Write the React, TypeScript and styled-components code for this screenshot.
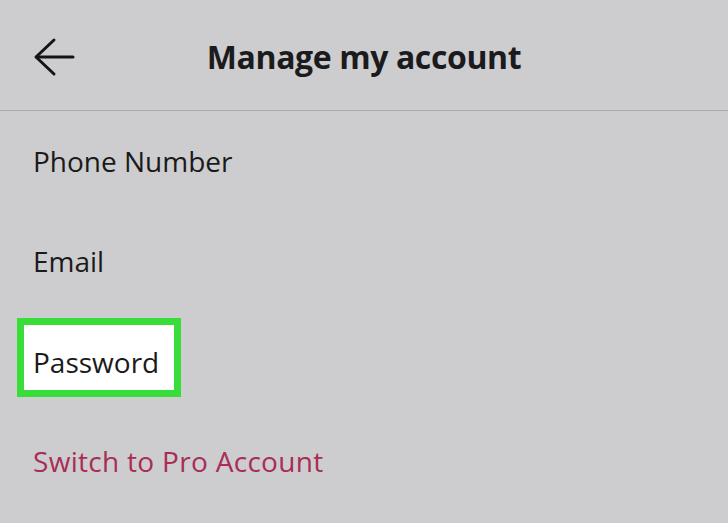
import React from 'react';
import styled, { createGlobalStyle } from 'styled-components';

const GlobalStyle = createGlobalStyle`
  html, body {
    margin: 0;
    padding: 0;
    background: #cdcdcf;
  }
  body {
    font-family: 'Open Sans', 'Liberation Sans', sans-serif;
    -webkit-font-smoothing: antialiased;
  }
`;

const Screen = styled.div`
  width: 728px;
  height: 523px;
  overflow: hidden;
  background: #cdcdcf;
`;

const Header = styled.header`
  display: grid;
  grid-template-columns: 1fr auto 1fr;
  align-items: center;
  height: 110px;
  border-bottom: 1px solid #a9a9ab;
`;

const BackButton = styled.button`
  justify-self: start;
  display: flex;
  align-items: center;
  margin-left: 32px;
  margin-top: 4px;
  padding: 0;
  border: 0;
  background: none;
  color: #141414;
`;

const Title = styled.h1`
  margin: 3px 0 0;
  font-size: 32px;
  font-weight: 700;
  letter-spacing: -0.4px;
  color: #1b1b1d;
`;

const List = styled.ul`
  margin: 0;
  padding: 0;
  list-style: none;
`;

const Row = styled.li<{ danger?: boolean }>`
  display: flex;
  align-items: center;
  height: 100px;
  padding-left: 33px;
  font-size: 28px;
  letter-spacing: ${(p) => (p.danger ? '0.3px' : '0')};
  color: ${(p) => (p.danger ? '#a92d55' : '#1a1a1a')};
`;

const Highlight = styled.span`
  display: inline-flex;
  align-items: center;
  box-sizing: border-box;
  height: 79px;
  margin: 0 0 7px -16px;
  padding: 8px 15px 0 9px;
  border: 7px solid #39dd39;
  background: #fff;
`;

const items = [
  { label: 'Phone Number' },
  { label: 'Email' },
  { label: 'Password', highlighted: true },
  { label: 'Switch to Pro Account', danger: true },
];

const App = () => {
  return (
    <Screen>
      <GlobalStyle />
      <Header>
        <BackButton aria-label="Back">
          <svg width="44" height="44" viewBox="0 0 44 44" fill="none" stroke="currentColor" strokeWidth="3" strokeLinecap="round" strokeLinejoin="round">
            <path d="M41 22H5" />
            <path d="M22 5L4 22l18 17" />
          </svg>
        </BackButton>
        <Title>Manage my account</Title>
      </Header>
      <List>
        {items.map((item) => (
          <Row key={item.label} danger={item.danger}>
            {item.highlighted ? <Highlight>{item.label}</Highlight> : item.label}
          </Row>
        ))}
      </List>
    </Screen>
  );
};

export default App;
